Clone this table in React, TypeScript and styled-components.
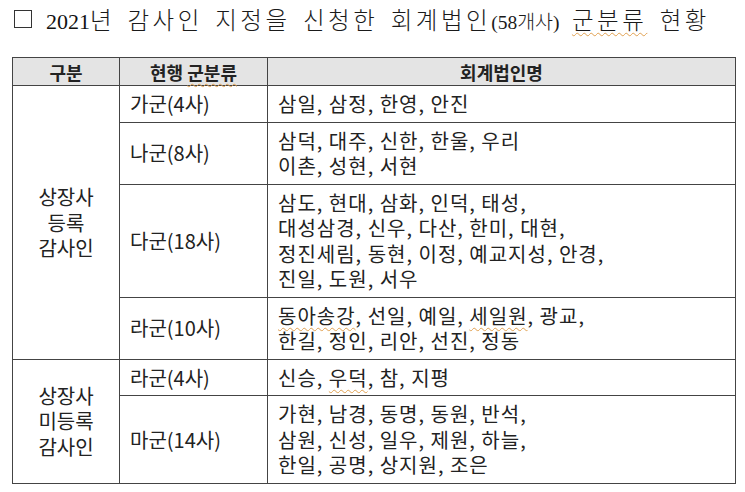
import React from "react";
import styled, { createGlobalStyle } from "styled-components";

interface Group {
  label: string[];
  rows: { cls: string; names: string[] }[];
}

const groups: Group[] = [
  {
    label: ["상장사", "등록", "감사인"],
    rows: [
      { cls: "가군(4사)", names: ["삼일, 삼정, 한영, 안진"] },
      { cls: "나군(8사)", names: ["삼덕, 대주, 신한, 한울, 우리", "이촌, 성현, 서현"] },
      {
        cls: "다군(18사)",
        names: [
          "삼도, 현대, 삼화, 인덕, 태성,",
          "대성삼경, 신우, 다산, 한미, 대현,",
          "정진세림, 동현, 이정, 예교지성, 안경,",
          "진일, 도원, 서우",
        ],
      },
      {
        cls: "라군(10사)",
        names: ["동아송강, 선일, 예일, 세일원, 광교,", "한길, 정인, 리안, 선진, 정동"],
      },
    ],
  },
  {
    label: ["상장사", "미등록", "감사인"],
    rows: [
      { cls: "라군(4사)", names: ["신승, 우덕, 참, 지평"] },
      {
        cls: "마군(14사)",
        names: ["가현, 남경, 동명, 동원, 반석,", "삼원, 신성, 일우, 제원, 하늘,", "한일, 공명, 상지원, 조은"],
      },
    ],
  },
];

// words the word processor flagged with its spell-check squiggle
const flagged = ["동아송강", "세일원", "우덕"];

function renderLine(line: string) {
  const parts = line.split(/(동아송강|세일원|우덕)/);
  return parts.map((p, i) =>
    flagged.includes(p) ? <Squiggle key={i}>{p}</Squiggle> : <React.Fragment key={i}>{p}</React.Fragment>
  );
}

export default function App() {
  return (
    <>
      <GlobalStyle />
      <Page>
        <Title>
          <Box />
          <Digits>2021</Digits>
          <span>년 감사인 지정을 신청한 회계법인</span>
          <Small>(58개사)</Small>
          <span>
            {" "}
            <Squiggle>군분류</Squiggle> 현황
          </span>
        </Title>
        <Table>
          <colgroup>
            <col style={{ width: 107 }} />
            <col style={{ width: 148 }} />
            <col />
          </colgroup>
          <thead>
            <tr>
              <HeadCell>구분</HeadCell>
              <HeadCell>
                현행 <Squiggle>군분류</Squiggle>
              </HeadCell>
              <HeadCell>회계법인명</HeadCell>
            </tr>
          </thead>
          <tbody>
            {groups.map((g) =>
              g.rows.map((r, i) => (
                <tr key={g.label.join() + r.cls}>
                  {i === 0 && (
                    <GroupCell rowSpan={g.rows.length}>
                      {g.label.map((l) => (
                        <div key={l}>{l}</div>
                      ))}
                    </GroupCell>
                  )}
                  <ClassCell>{r.cls}</ClassCell>
                  <NameCell>
                    {r.names.map((n) => (
                      <div key={n}>{renderLine(n)}</div>
                    ))}
                  </NameCell>
                </tr>
              ))
            )}
          </tbody>
        </Table>
      </Page>
    </>
  );
}

const GlobalStyle = createGlobalStyle`
  body {
    margin: 0;
    background: #fff;
  }
`;

const Page = styled.div`
  width: 745px;
  height: 492px;
  padding: 2px 0 0 12px;
  box-sizing: border-box;
  font-family: "Noto Sans CJK KR", sans-serif;
  color: #222;
`;

const Title = styled.div`
  display: flex;
  align-items: baseline;
  padding-left: 2px;
  font-family: "Liberation Serif", "Noto Sans CJK KR", serif;
  font-size: 23.5px;
  font-weight: 300;
  letter-spacing: 3.5px;
  word-spacing: 3px;
  color: #1a1a1a;
  white-space: pre;
  height: 55px;
`;

const Digits = styled.span`
  font-size: 22px;
  letter-spacing: 0;
  color: #111;
`;

const Box = styled.span`
  display: inline-block;
  flex: none;
  width: 16px;
  height: 16px;
  border: 1.2px solid #333;
  margin-right: 14px;
  align-self: flex-start;
  margin-top: 8px;
`;

const Small = styled.span`
  font-size: 19.5px;
  letter-spacing: 0;
  word-spacing: 0;
`;

const Squiggle = styled.span`
  text-decoration: underline wavy #e0a050;
  text-decoration-thickness: 1px;
  text-underline-offset: 3px;
`;

const Table = styled.table`
  width: 724px;
  border-collapse: collapse;
  table-layout: fixed;
  border: 1.5px solid #444;
  font-size: 20px;
  line-height: 25.5px;
`;

const HeadCell = styled.th`
  background: #e4e4e4;
  border: 1px solid #444;
  height: 27px;
  padding: 0;
  font-size: 18px;
  font-weight: 700;
  line-height: 20px;
  color: #222;
`;

const GroupCell = styled.td`
  border: 1px solid #444;
  text-align: center;
  vertical-align: middle;
  padding: 0;
`;

const ClassCell = styled.td`
  border: 1px solid #444;
  padding: 5px 0 5px 10px;
  vertical-align: middle;
`;

const NameCell = styled.td`
  border: 1px solid #444;
  padding: 5px 0 5px 10px;
  vertical-align: middle;
  letter-spacing: 1px;
`;
